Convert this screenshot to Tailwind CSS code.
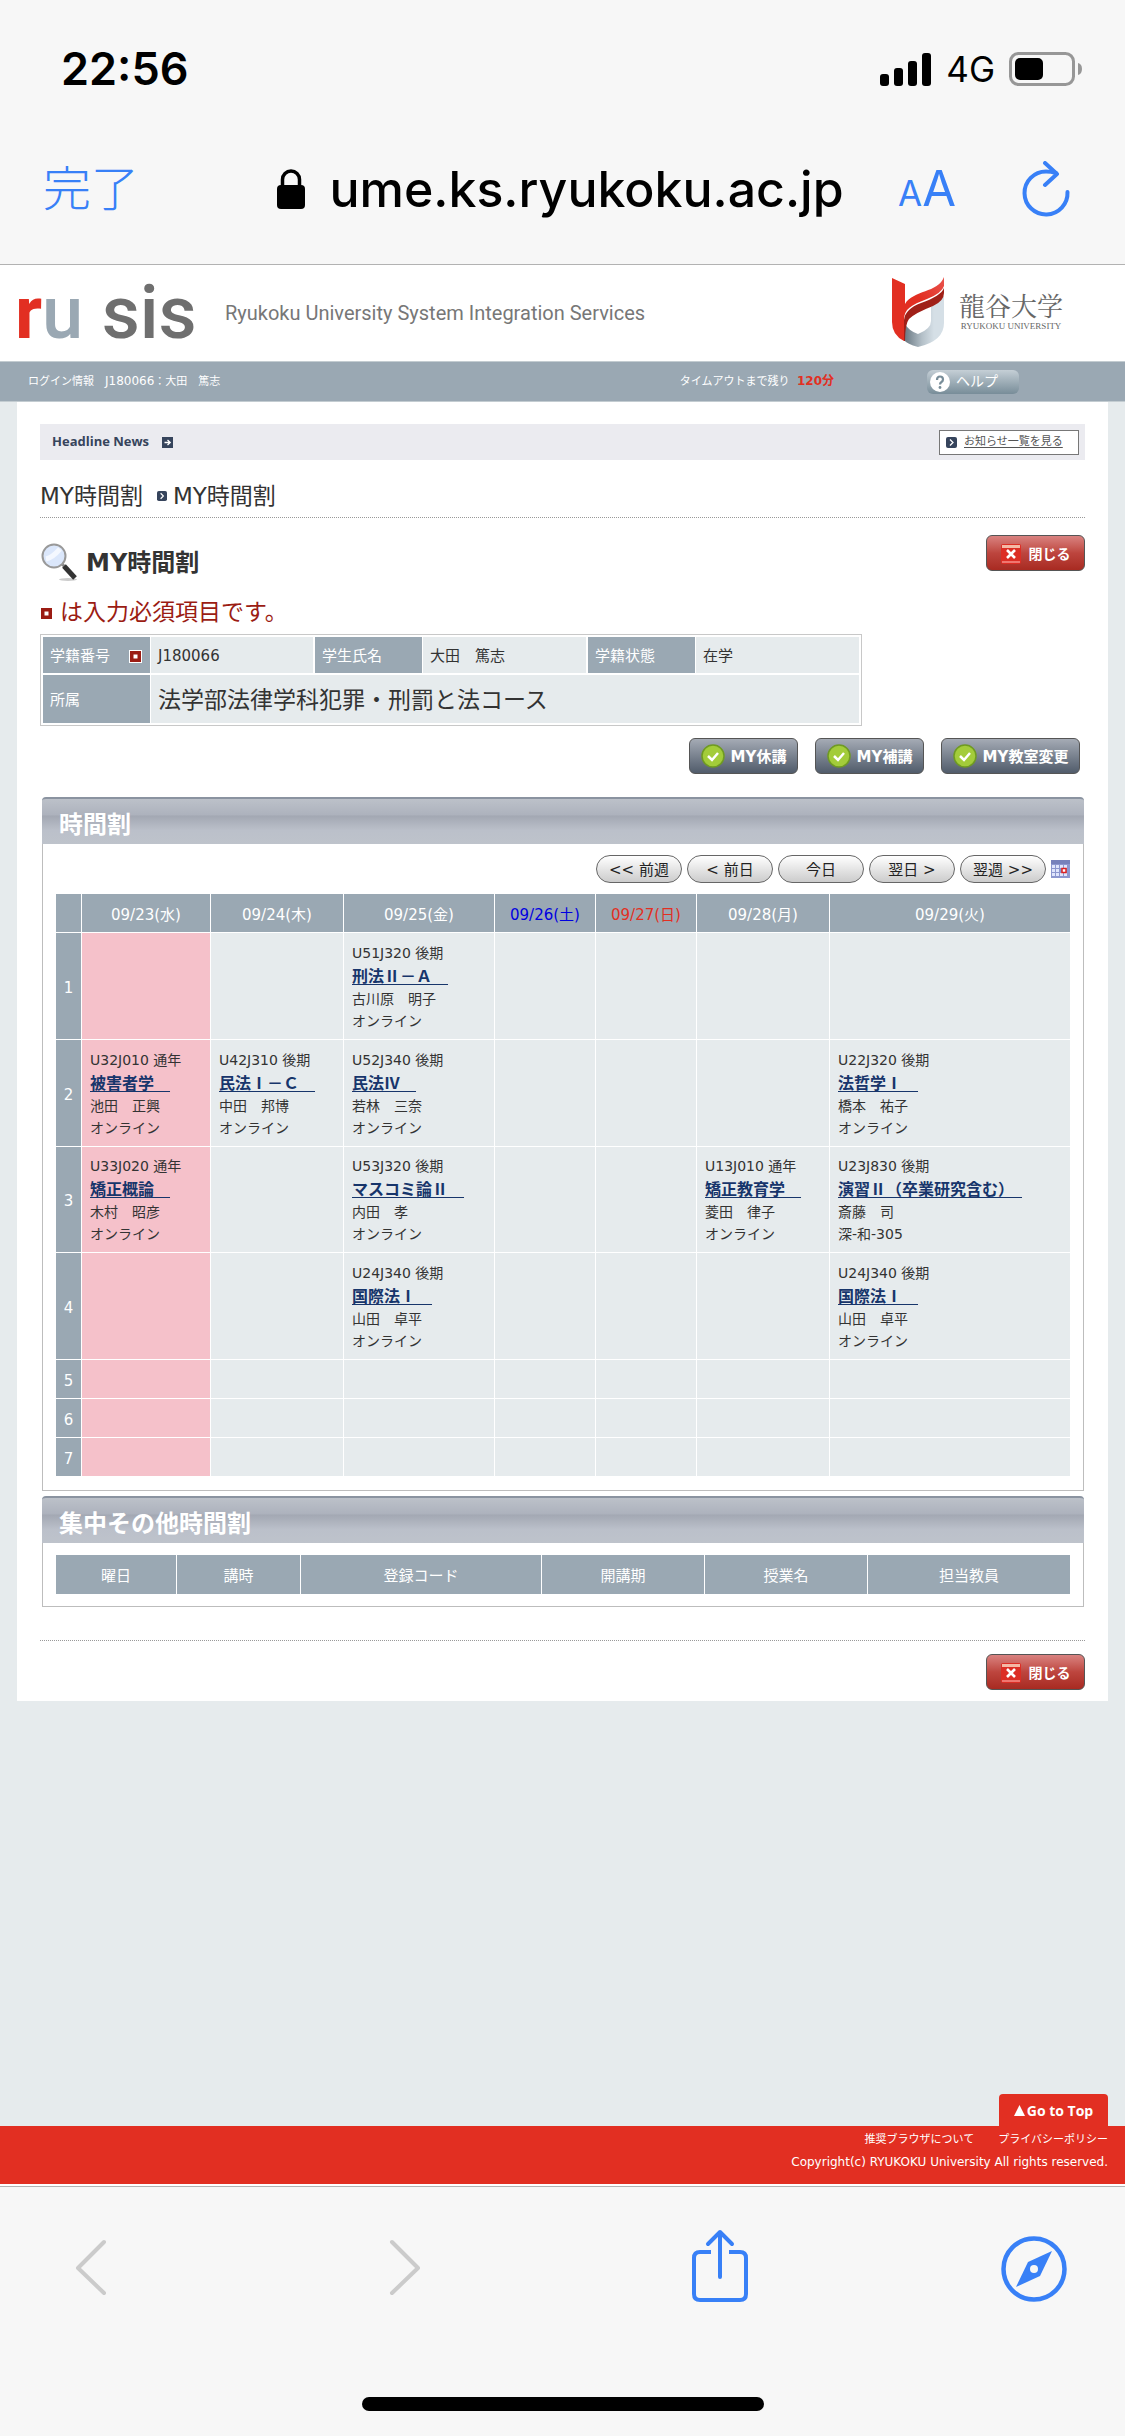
<!DOCTYPE html>
<html lang="ja">
<head>
<meta charset="utf-8">
<meta name="viewport" content="width=device-width, initial-scale=1">
<title>MY時間割</title>
<script src="https://cdn.jsdelivr.net/npm/@tailwindcss/browser@4"></script>
</head>
<body class="flex min-h-screen flex-col bg-[#e6ebed] font-['DejaVu_Sans','Noto_Sans_CJK_JP',sans-serif] text-[#333]">

<!-- Browser chrome: status bar and address bar -->
<header class="border-b border-[#b2b2b2] bg-[#f7f7f7] font-[Inter,'Noto_Sans_CJK_JP',sans-serif] text-black">
  <div class="flex h-[138px] items-center justify-between pr-[42px] pl-[61px]">
    <span class="text-[45px] leading-[50px] font-semibold">22:56</span>
    <div class="flex items-center gap-[14px]">
      <svg class="h-[33px] w-[52px]" viewBox="0 0 52 33"><rect x="0" y="21" width="9" height="12" rx="3"/><rect x="14" y="15" width="9" height="18" rx="3"/><rect x="28" y="8" width="9" height="25" rx="3"/><rect x="42" y="0" width="9" height="33" rx="3"/></svg>
      <span class="text-[35px] leading-[40px]">4G</span>
      <svg class="h-[34px] w-[74px]" viewBox="0 0 74 34"><rect x="1.5" y="1.5" width="63" height="31" rx="8" fill="none" stroke="#979797" stroke-width="3"/><rect x="6" y="6" width="28" height="22" rx="5"/><path d="M69 11q4 1 4 6t-4 6z" fill="#979797"/></svg>
    </div>
  </div>
  <div class="mb-6 flex h-[102px] items-center pr-[55px] pl-[43px]">
    <button class="text-[48px] leading-[60px] font-light text-[#3880f7]">完了</button>
    <div class="flex flex-1 items-center justify-center gap-6 pl-[84px]">
      <svg class="h-[40px] w-[28px]" viewBox="0 0 28 40"><rect y="16" width="28" height="24" rx="4"/><path d="M5.500 18V10.500a8.500 8.500 0 0 1 17 0V18" fill="none" stroke="#000" stroke-width="3.500"/></svg>
      <span class="text-[50px] leading-[60px] font-medium">ume.ks.ryukoku.ac.jp</span>
    </div>
    <button class="mr-[66px] flex items-baseline pt-1 text-[#3880f7]" aria-label="表示設定"><span class="text-[35px] leading-[60px]">A</span><span class="text-[49px] leading-[60px]">A</span></button>
    <button aria-label="再読み込み"><svg class="h-[56px] w-[48px]" viewBox="0 0 48 56" fill="none" stroke="#3880f7" stroke-width="4" stroke-linecap="round" stroke-linejoin="round"><path d="M45.500 31A21.500 21.500 0 1 1 24 10.500q5 0 10 1.500"/><path d="M23 2l12 11-12 11"/></svg></button>
  </div>
</header>

<!-- Site header -->
<div class="flex h-[96px] items-start justify-between bg-white pr-[62px] pl-[15px]">
  <div class="flex items-center">
    <h1 class="w-[178px] text-[74px] leading-[96px] font-medium whitespace-nowrap text-[#6f6f6f] font-[Roboto,sans-serif]"><span class="font-bold text-[#e22f22]">r</span><span class="text-[#9aa8b3]">u</span> sis</h1>
    <p class="pl-[32px] text-[20px] whitespace-nowrap text-[#777] font-[Roboto,sans-serif]">Ryukoku University System Integration Services</p>
  </div>
  <div class="flex items-start gap-[14px] pt-[11px]">
    <svg class="h-[72px] w-[54px]" viewBox="0 0 54 72">
      <defs>
        <linearGradient id="silver"><stop offset="0" stop-color="#66757f"/><stop offset=".45" stop-color="#b4c0c8"/><stop offset=".75" stop-color="#d5dfe6"/></linearGradient>
        <linearGradient id="ribbon" x1="0" x2="1" y1="1" y2="0"><stop offset="0" stop-color="#e22f22"/><stop offset=".6" stop-color="#e22f22"/><stop offset="1" stop-color="#e9534d"/></linearGradient>
      </defs>
      <path d="M40 31L53 20V47Q53 65 27 71Q16 68 13 64L14 48Q18 55 27 58Q40 53 40 45Z" fill="url(#silver)"/>
      <path d="M13 65V44Q14 33 30 27Q50 20 53 12V17Q53 25 42 30Q24 37 18 43Q14 48 14 65Z" fill="#a02018"/>
      <path d="M1 2L14 8V28C22 14 47 17 53 1V10Q51 17 36 23C20 29 13 33 13 44V65Q1 59 1 46Z" fill="url(#ribbon)"/>
    </svg>
    <div class="w-[104px] pt-[13px] text-center whitespace-nowrap">
      <p class="text-[26px] leading-[32px] text-[#666] font-['Noto_Serif_CJK_JP','Noto_Sans_CJK_JP',serif]">龍谷大学</p>
      <p class="text-[9px] leading-[10px] text-[#666] font-['Liberation_Serif',serif]">RYUKOKU UNIVERSITY</p>
    </div>
  </div>
</div>
<div class="flex h-[41px] items-center border-y border-[#c3ccd1] bg-[#9aa8b3] pr-[106px] pl-[28px] text-[11px] text-white">
  <p class="flex-1">ログイン情報　<span class="text-[12px]">J180066</span>：大田　篤志</p>
  <p class="mr-[93px]">タイムアウトまで残り <strong class="pl-1 text-[12px] text-[#e22f22]">120分</strong></p>
  <a href="#" class="flex h-6 w-[92px] items-center gap-[6px] rounded-md bg-linear-to-b from-[#c5cfd6] to-[#788d99] pl-[3px] text-[14px]"><svg class="size-5" viewBox="0 0 20 20"><circle cx="10" cy="10" r="10" fill="#fff"/><path d="M7 8q0-3.500 3-3.500T13 7.500q0 1.500-1.500 2.500T10 12.500" fill="none" stroke="#788d99" stroke-width="2.200"/><circle cx="10" cy="15.500" r="1.400" fill="#788d99"/></svg>ヘルプ</a>
</div>

<main class="mx-[17px] bg-white px-[23px] pt-[22px] pb-[11px]">
  <div class="flex h-[36px] items-center bg-[#ebebf0] pr-[6px] pl-[12px]">
    <h2 class="text-[13px] font-bold text-[#36445c] font-['Open_Sans',sans-serif]">Headline News</h2>
    <svg class="ml-[13px] size-[11px]" viewBox="0 0 11 11"><rect width="11" height="11" fill="#36445c"/><path d="M2.500 5.500h6M5.500 3l2.700 2.500L5.500 8" fill="none" stroke="#fff" stroke-width="1.300"/></svg>
    <a href="#" class="ml-auto flex h-[25px] w-[140px] items-center gap-[7px] border border-[#777] bg-white pl-[6px] text-[11px] text-[#555]"><svg class="size-[11px]" viewBox="0 0 11 11"><rect width="11" height="11" rx="2" fill="#36445c"/><path d="M4 2.500l3 3-3 3" fill="none" stroke="#fff" stroke-width="1.300"/></svg><span class="underline underline-offset-2">お知らせ一覧を見る</span></a>
  </div>

  <nav class="flex items-center border-b border-dotted border-[#999] pt-[19px] pb-1 text-[23px] leading-[34px]">
    <span>MY時間割</span>
    <svg class="mr-[6px] ml-[14px] size-[10px]" viewBox="0 0 11 11"><rect width="11" height="11" rx="2" fill="#36445c"/><path d="M4 2.500l3 3-3 3" fill="none" stroke="#fff" stroke-width="1.300"/></svg>
    <span>MY時間割</span>
  </nav>

  <div class="flex items-start justify-between pt-[17px]">
    <div class="flex items-center gap-[8px] pt-[8px]">
      <svg class="h-[38px] w-[38px]" viewBox="0 0 38 38">
        <ellipse cx="28" cy="36.500" rx="9" ry="1.500" fill="#ccc"/>
        <path d="M21 20l4 4" stroke="#888" stroke-width="3"/><path d="M24 23l11 12" stroke="#333" stroke-width="5"/>
        <circle cx="14" cy="13" r="11.500" fill="#dbe7fb" stroke="#999" stroke-width="2"/><path d="M6 16Q12 15 20 6" fill="none" stroke="#f4f8ff" stroke-width="5"/>
      </svg>
      <h2 class="pt-[2px] text-[24px] leading-[36px] font-bold">MY時間割</h2>
    </div>
    <button class="flex h-[36px] w-[99px] items-center justify-center gap-[8px] rounded-md border border-[#555] bg-linear-to-b from-[#d98280] from-0% via-[#bd453e] via-50% to-[#a82a21] pt-[2px] text-[14px] font-bold text-white"><svg class="size-[20px]" viewBox="0 0 20 20"><rect width="20" height="20" rx="2" fill="#dc2e25"/><path d="M1 1h18v3H1z" fill="#f4b9a6"/><path d="M1 17h18v2H1z" fill="#ef7770"/><path d="M6 6l8 8M14 6l-8 8" stroke="#fff" stroke-width="2.600"/></svg>閉じる</button>
  </div>

  <p class="mt-[14px] flex items-center gap-[8px] text-[23px] leading-[34px] text-[#9b1c13]"><svg class="mt-[3px] ml-px size-[11px]" viewBox="0 0 11 11"><rect width="11" height="11" fill="#9b1c13"/><rect x="3.500" y="3.500" width="4" height="4" fill="#fff"/></svg>は入力必須項目です。</p>

  <div class="mt-[5px] w-[822px] max-w-full border border-[#c8c8c8] p-px">
    <table class="w-full table-fixed border-separate border-spacing-0 text-left text-[15px] [&_td]:border [&_td]:border-white [&_td]:bg-[#e6ebed] [&_td]:pt-[3px] [&_td]:pl-[7px] [&_th]:border [&_th]:border-r-0 [&_th]:border-white [&_th]:bg-[#9aa8b3] [&_th]:pt-[3px] [&_th]:pl-[7px] [&_th]:font-normal [&_th]:text-white">
      <colgroup><col class="w-[108px]"><col class="w-[164px]"><col class="w-[108px]"><col class="w-[165px]"><col class="w-[108px]"><col></colgroup>
      <tr class="h-[38px]"><th><span class="flex items-center justify-between pr-[8px]">学籍番号<svg class="size-[13px]" viewBox="0 0 13 13"><rect x=".5" y=".5" width="12" height="12" fill="#9b1c13" stroke="#fff"/><rect x="4.500" y="4.500" width="4" height="4" fill="#fff"/></svg></span></th><td>J180066</td><th>学生氏名</th><td>大田　篤志</td><th>学籍状態</th><td>在学</td></tr>
      <tr class="h-[50px]"><th>所属</th><td colspan="5" class="text-[23px]">法学部法律学科犯罪・刑罰と法コース</td></tr>
    </table>
  </div>

  <div class="mt-[12px] flex justify-end gap-[17px] pr-[5px] text-[15px] font-bold text-white">
    <button class="flex h-[36px] w-[109px] items-center justify-center gap-[6px] rounded-md border border-[#555] bg-linear-to-b from-[#a5abb5] to-[#515c6b]"><svg class="size-[24px]" viewBox="0 0 24 24"><circle cx="12" cy="12" r="11" fill="#a3cc3a" stroke="#6f9a22" stroke-width="1.500"/><path d="M7 12l4 4 6-7" fill="none" stroke="#fff" stroke-width="2.500"/></svg><span class="pt-[3px]">MY休講</span></button>
    <button class="flex h-[36px] w-[109px] items-center justify-center gap-[6px] rounded-md border border-[#555] bg-linear-to-b from-[#a5abb5] to-[#515c6b]"><svg class="size-[24px]" viewBox="0 0 24 24"><circle cx="12" cy="12" r="11" fill="#a3cc3a" stroke="#6f9a22" stroke-width="1.500"/><path d="M7 12l4 4 6-7" fill="none" stroke="#fff" stroke-width="2.500"/></svg><span class="pt-[3px]">MY補講</span></button>
    <button class="flex h-[36px] w-[139px] items-center justify-center gap-[6px] rounded-md border border-[#555] bg-linear-to-b from-[#a5abb5] to-[#515c6b]"><svg class="size-[24px]" viewBox="0 0 24 24"><circle cx="12" cy="12" r="11" fill="#a3cc3a" stroke="#6f9a22" stroke-width="1.500"/><path d="M7 12l4 4 6-7" fill="none" stroke="#fff" stroke-width="2.500"/></svg><span class="pt-[3px]">MY教室変更</span></button>
  </div>

  <section class="mt-[23px] mr-px ml-[2px]">
    <h2 class="h-[47px] rounded-t border-t-2 border-[#8a93a0] bg-[linear-gradient(#bcc1c9,#adb2bd_35%,#a3a8b3_38%,#bbc0ca_70%,#bec3cb)] pt-[7px] pl-[17px] text-[24px] leading-[38px] font-bold text-white">時間割</h2>
    <div class="border border-t-0 border-[#bdbdbd] px-[13px] pt-[11px] pb-[13px]">
      <div class="flex items-center justify-end gap-[5px] text-[15px] text-[#222]">
        <button class="h-[28px] w-[86px] rounded-full border border-[#666] bg-linear-to-b from-white to-[#ccc] pt-[2px] whitespace-nowrap">&lt;&lt; 前週</button>
        <button class="h-[28px] w-[86px] rounded-full border border-[#666] bg-linear-to-b from-white to-[#ccc] pt-[2px] whitespace-nowrap">&lt; 前日</button>
        <button class="h-[28px] w-[86px] rounded-full border border-[#666] bg-linear-to-b from-white to-[#ccc] pt-[2px] whitespace-nowrap">今日</button>
        <button class="h-[28px] w-[86px] rounded-full border border-[#666] bg-linear-to-b from-white to-[#ccc] pt-[2px] whitespace-nowrap">翌日 &gt;</button>
        <button class="h-[28px] w-[86px] rounded-full border border-[#666] bg-linear-to-b from-white to-[#ccc] pt-[2px] whitespace-nowrap">翌週 &gt;&gt;</button>
        <button aria-label="カレンダー"><svg class="h-[18px] w-[19px]" viewBox="0 0 19 18"><rect width="19" height="18" fill="#8c97cf"/><rect width="19" height="4" fill="#7681bb"/><path d="M1 5h3v3H1zm4 0h3v3H5zm4 0h3v3H9zm4 0h3v3h-3zM1 9h3v3H1zm4 0h3v3H5zM1 13h3v3H1zm4 0h3v3H5zm4 0h3v3H9zm4 0h3v3h-3z" fill="#dfe5fc"/><rect x="11" y="8.500" width="4" height="4" fill="#fff" stroke="#d22" stroke-width="1.500"/></svg></button>
      </div>

      <table class="mt-[11px] w-full table-fixed border-separate border-spacing-0 text-[14px] leading-[22px] [&_td]:border-b [&_td]:border-l [&_td]:border-white [&_td]:pt-px [&_td]:pl-[8px] [&_td]:whitespace-nowrap [&_th]:border-b [&_th]:border-white [&_th]:bg-[#9aa8b3] [&_th]:pt-[3px] [&_th]:text-[15px] [&_th]:font-normal [&_th+th]:border-l [&_a]:font-['Noto_Sans_CJK_JP',sans-serif] [&_a]:text-[16px] [&_a]:font-bold [&_a]:whitespace-pre [&_a]:text-[#17356b] [&_a]:underline [&_a]:underline-offset-2">
        <colgroup><col class="w-[25px]"><col class="w-[129px]"><col class="w-[133px]"><col class="w-[151px]"><col class="w-[101px]"><col class="w-[101px]"><col class="w-[133px]"><col></colgroup>
        <thead><tr class="h-[39px] text-white"><th></th><th>09/23(水)</th><th>09/24(木)</th><th>09/25(金)</th><th class="text-[#0000e0]">09/26(土)</th><th class="text-[#e22f22]">09/27(日)</th><th>09/28(月)</th><th>09/29(火)</th></tr></thead>
        <tbody class="bg-[#e6ebed]">
        <tr class="h-[107px]"><th class="text-white">1</th><td class="bg-[#f5c1ca]"></td><td></td><td>U51J320 後期<br><a href="#">刑法Ⅱ－Ａ　</a><br>古川原　明子<br>オンライン</td><td></td><td></td><td></td><td></td></tr>
        <tr class="h-[107px]"><th class="text-white">2</th><td class="bg-[#f5c1ca]">U32J010 通年<br><a href="#">被害者学　</a><br>池田　正興<br>オンライン</td><td>U42J310 後期<br><a href="#">民法Ⅰ－Ｃ　</a><br>中田　邦博<br>オンライン</td><td>U52J340 後期<br><a href="#">民法Ⅳ　</a><br>若林　三奈<br>オンライン</td><td></td><td></td><td></td><td>U22J320 後期<br><a href="#">法哲学Ⅰ　</a><br>橋本　祐子<br>オンライン</td></tr>
        <tr class="h-[106px]"><th class="text-white">3</th><td class="bg-[#f5c1ca]">U33J020 通年<br><a href="#">矯正概論　</a><br>木村　昭彦<br>オンライン</td><td></td><td>U53J320 後期<br><a href="#">マスコミ論Ⅱ　</a><br>内田　孝<br>オンライン</td><td></td><td></td><td>U13J010 通年<br><a href="#">矯正教育学　</a><br>菱田　律子<br>オンライン</td><td>U23J830 後期<br><a href="#">演習Ⅱ（卒業研究含む）　</a><br>斎藤　司<br>深-和-305</td></tr>
        <tr class="h-[107px]"><th class="text-white">4</th><td class="bg-[#f5c1ca]"></td><td></td><td>U24J340 後期<br><a href="#">国際法Ⅰ　</a><br>山田　卓平<br>オンライン</td><td></td><td></td><td></td><td>U24J340 後期<br><a href="#">国際法Ⅰ　</a><br>山田　卓平<br>オンライン</td></tr>
        <tr class="h-[39px]"><th class="text-white">5</th><td class="bg-[#f5c1ca]"></td><td></td><td></td><td></td><td></td><td></td><td></td></tr>
        <tr class="h-[39px]"><th class="text-white">6</th><td class="bg-[#f5c1ca]"></td><td></td><td></td><td></td><td></td><td></td><td></td></tr>
        <tr class="h-[39px]"><th class="text-white">7</th><td class="bg-[#f5c1ca]"></td><td></td><td></td><td></td><td></td><td></td><td></td></tr>
        </tbody>
      </table>
    </div>
  </section>

  <section class="mt-[5px] mr-px ml-[2px]">
    <h2 class="h-[47px] rounded-t border-t-2 border-[#8a93a0] bg-[linear-gradient(#bcc1c9,#adb2bd_35%,#a3a8b3_38%,#bbc0ca_70%,#bec3cb)] pt-[7px] pl-[17px] text-[24px] leading-[38px] font-bold text-white">集中その他時間割</h2>
    <div class="border border-t-0 border-[#bdbdbd] px-[13px] pt-[12px] pb-[12px]">
      <table class="w-full table-fixed border-separate border-spacing-0 text-[15px] text-white [&_th]:bg-[#9aa8b3] [&_th]:pt-[3px] [&_th]:font-normal [&_th+th]:border-l [&_th+th]:border-white">
        <colgroup><col class="w-[120px]"><col class="w-[124px]"><col class="w-[241px]"><col class="w-[163px]"><col class="w-[163px]"><col></colgroup>
        <tr class="h-[39px]"><th>曜日</th><th>講時</th><th>登録コード</th><th>開講期</th><th>授業名</th><th>担当教員</th></tr>
      </table>
    </div>
  </section>

  <div class="mt-[33px] flex justify-end border-t border-dotted border-[#999] pt-[13px]">
    <button class="flex h-[36px] w-[99px] items-center justify-center gap-[8px] rounded-md border border-[#555] bg-linear-to-b from-[#d98280] from-0% via-[#bd453e] via-50% to-[#a82a21] pt-[2px] text-[14px] font-bold text-white"><svg class="size-[20px]" viewBox="0 0 20 20"><rect width="20" height="20" rx="2" fill="#dc2e25"/><path d="M1 1h18v3H1z" fill="#f4b9a6"/><path d="M1 17h18v2H1z" fill="#ef7770"/><path d="M6 6l8 8M14 6l-8 8" stroke="#fff" stroke-width="2.600"/></svg>閉じる</button>
  </div>
</main>

<!-- Site footer -->
<footer class="mt-auto border-b-2 border-white">
  <div class="flex justify-end pr-[17px]"><a href="#" class="flex h-[32px] w-[109px] items-center justify-center gap-[2px] rounded-t bg-[#e22f22] text-[14px] font-bold text-white font-['Open_Sans',sans-serif]"><svg class="size-[11px]" viewBox="0 0 10 10"><path d="M5 0l5 10H0z" fill="#fff"/></svg>Go to Top</a></div>
  <div class="h-[58px] bg-[#e22f22] pt-[3px] pr-[17px] text-right text-[11px] leading-[22px] text-white">
    <p class="flex justify-end gap-[24px]"><a href="#">推奨ブラウザについて</a><a href="#">プライバシーポリシー</a></p>
    <p class="text-[12px]">Copyright(c) RYUKOKU University All rights reserved.</p>
  </div>
</footer>

<!-- Browser toolbar -->
<div class="border-t border-[#b2b2b2] bg-[#f7f7f7]">
  <div class="flex items-center justify-between px-[58px] pt-[40px]">
    <button class="flex w-[66px] justify-center" aria-label="戻る"><svg class="h-[76px] w-[32px]" viewBox="0 0 32 76" fill="none" stroke="#cbcbcb" stroke-width="4" stroke-linecap="round" stroke-linejoin="round"><path d="M29 15L3 41l26 25"/></svg></button>
    <button class="flex w-[66px] justify-center" aria-label="進む"><svg class="h-[76px] w-[32px]" viewBox="0 0 32 76" fill="none" stroke="#cbcbcb" stroke-width="4" stroke-linecap="round" stroke-linejoin="round"><path d="M3 15l26 26L3 66"/></svg></button>
    <button class="flex w-[66px] justify-center" aria-label="共有"><svg class="h-[76px] w-[58px]" viewBox="0 0 58 76" fill="none" stroke="#3880f7" stroke-width="4" stroke-linecap="round" stroke-linejoin="round"><path d="M20 25H9q-6 0-6 6v36q0 6 6 6h40q6 0 6-6V31q0-6-6-6H38" stroke-linecap="butt"/><path d="M29 50V5M17 17L29 5l12 12"/></svg></button>
    <button class="flex w-[66px] justify-center" aria-label="Safariで開く"><svg class="h-[76px] w-[66px]" viewBox="0 0 66 76"><circle cx="33" cy="42" r="30.500" fill="none" stroke="#3880f7" stroke-width="4.500"/><path d="M51 24L39 49 15 60 27 35Z" fill="#3880f7"/><circle cx="33" cy="42" r="4" fill="#f7f7f7"/></svg></button>
  </div>
  <div class="mx-auto mt-[94px] mb-[25px] h-[14px] w-[402px] rounded-full bg-black"></div>
</div>
</body>
</html>
